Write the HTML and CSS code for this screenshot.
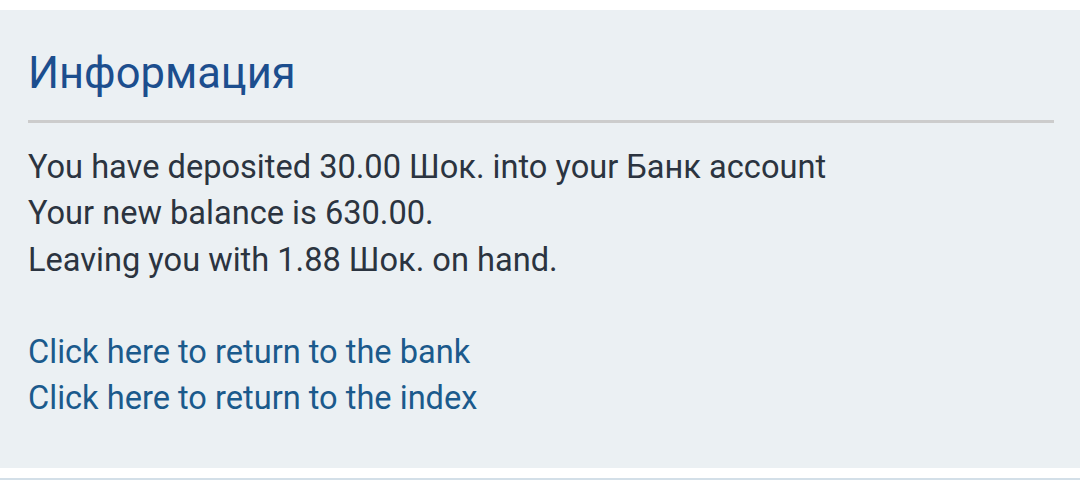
FILE: index.html
```html
<!DOCTYPE html>
<html lang="ru">
<head>
<meta charset="utf-8">
<title>Информация</title>
<link rel="stylesheet" href="styles.css">
</head>
<body>
<div class="panel">
  <h1 class="title">Информация</h1>
  <div class="content">
    <p class="line">You have deposited 30.00 Шок. into your Банк account</p>
    <p class="line">Your new balance is 630.00.</p>
    <p class="line">Leaving you with 1.88 Шок. on hand.</p>
    <p class="spacer"></p>
    <p class="line"><a class="link" href="#">Click here to return to the bank</a></p>
    <p class="line"><a class="link" href="#">Click here to return to the index</a></p>
  </div>
</div>
<div class="next"></div>
</body>
</html>
```
FILE: styles.css
```css
html, body {
  margin: 0;
  padding: 0;
  background: #ffffff;
}
body {
  font-family: Roboto, "Noto Sans", sans-serif;
  padding-top: 10px;
}
.panel {
  background: #ebf0f3;
  height: 458px;
  box-sizing: border-box;
  padding: 0 26px 0 28px;
}
.title {
  margin: 0;
  padding-top: 33px;
  font-size: 43.5px;
  font-weight: 400;
  line-height: 62px;
  color: #1c4e8e;
  border-bottom: 3px solid #cccccc;
  padding-bottom: 15px;
}
.content {
  padding-top: 21px;
}
.line {
  margin: 0;
  font-size: 32.6px;
  line-height: 46.3px;
  color: #2b3440;
}
.spacer {
  margin: 0;
  height: 46px;
}
.link {
  color: #1b5a8c;
  text-decoration: none;
}
.next {
  margin-top: 10px;
  height: 4px;
  background: #d3dfe8;
}
```
